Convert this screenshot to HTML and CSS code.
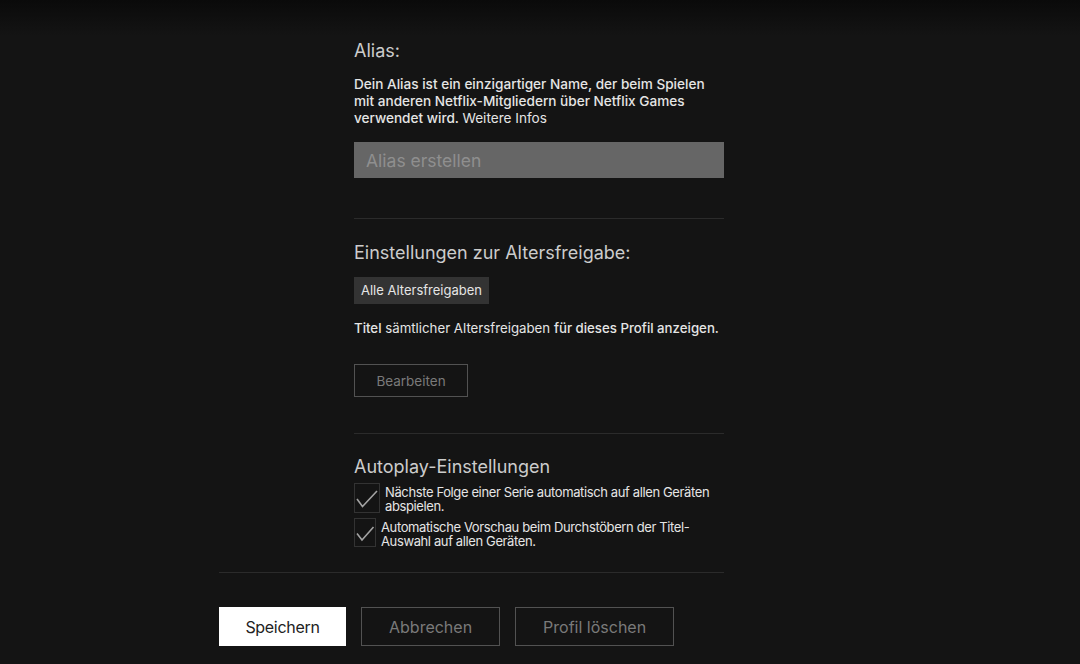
FILE: index.html
```html
<!DOCTYPE html>
<html lang="de">
<head>
    <meta charset="UTF-8">
    <meta name="viewport" content="width=device-width, initial-scale=1.0">
    <title>Profil bearbeiten</title>
    <link rel="stylesheet" href="styles.css">
</head>
<body>
    <div class="page">
        <div class="profile-grid">
            <div class="avatar-col"></div>
            <div class="details">
                <section class="section">
                    <h2 class="section-title">Alias:</h2>
                    <p class="alias-text">Dein Alias ist ein einzigartiger Name, der beim Spielen mit anderen Netflix-Mitgliedern über Netflix Games verwendet wird. <a href="#" class="more-link">Weitere Infos</a></p>
                    <input class="alias-input" type="text" placeholder="Alias erstellen">
                </section>

                <section class="section section-maturity">
                    <h2 class="section-title">Einstellungen zur Altersfreigabe:</h2>
                    <div class="rating-badge">Alle Altersfreigaben</div>
                    <p class="rating-text"><b>Titel</b> sämtlicher Altersfreigaben <b>für dieses Profil anzeigen.</b></p>
                    <button class="btn-outline btn-small">Bearbeiten</button>
                </section>

                <section class="section section-last">
                    <h2 class="section-title">Autoplay-Einstellungen</h2>
                    <label class="check-row">
                        <span class="check-box">
                            <svg viewBox="0 0 26 30" width="26" height="30"><polyline points="3,16 8.5,23.5 23,8" fill="none" stroke="#a3a3a3" stroke-width="1.6"/></svg>
                        </span>
                        <span class="check-label">Nächste Folge einer Serie automatisch auf allen Geräten abspielen.</span>
                    </label>
                    <label class="check-row">
                        <span class="check-box check-box-narrow">
                            <svg viewBox="0 0 22 29" width="22" height="29"><polyline points="3,15.5 8,22 19.5,9" fill="none" stroke="#a3a3a3" stroke-width="1.6"/></svg>
                        </span>
                        <span class="check-label">Automatische Vorschau beim Durchstöbern der Titel-Auswahl auf allen Geräten.</span>
                    </label>
                </section>
            </div>
        </div>

        <div class="actions">
            <button class="btn-save">Speichern</button>
            <button class="btn-outline btn-big">Abbrechen</button>
            <button class="btn-outline btn-big">Profil löschen</button>
        </div>
    </div>
</body>
</html>
```

FILE: styles.css
```css
* {
    margin: 0;
    padding: 0;
    box-sizing: border-box;
}

body {
    font-family: Inter, "Noto Sans", Arial, sans-serif;
    min-height: 100vh;
    background: #141414 linear-gradient(to bottom, #0a0a0a, #141414 36px) no-repeat;
    background-size: 100% 36px;
    color: #e5e5e5;
    overflow: hidden;
}

.page {
    width: 505px;
    margin-left: 219px;
    padding-top: 41px;
}

.profile-grid {
    display: grid;
    grid-template-columns: 135px 370px;
}

.section {
    border-bottom: 1px solid #2b2b2b;
    padding-bottom: 40px;
}

.section-maturity {
    padding-top: 24px;
    padding-bottom: 36px;
}

.section-last {
    border-bottom: none;
    padding-top: 23px;
    padding-bottom: 24px;
}

.section-title {
    font-size: 18px;
    font-weight: 400;
    line-height: 20px;
    color: #cccccc;
}

.alias-text {
    margin-top: 15px;
    font-size: 13.6px;
    font-weight: 500;
    line-height: 17px;
    color: #e5e5e5;
}

.more-link {
    color: #e5e5e5;
    font-weight: 400;
    text-decoration: none;
}

.alias-input {
    display: block;
    width: 370px;
    height: 36px;
    margin-top: 15px;
    padding: 0 12px;
    border: none;
    background-color: #666666;
    font-family: inherit;
    font-size: 17.5px;
    color: #fff;
    outline: none;
}

.alias-input::placeholder {
    color: #8f8f8f;
}

.rating-badge {
    display: inline-block;
    margin-top: 14px;
    height: 27px;
    line-height: 27px;
    padding: 0 7px;
    background-color: #333333;
    font-size: 13px;
    color: #e5e5e5;
}

.rating-text {
    margin-top: 16px;
    font-size: 13.25px;
    line-height: 17px;
    color: #e5e5e5;
}

.rating-text b {
    font-weight: 500;
}

.btn-outline {
    display: block;
    background: transparent;
    border: 1px solid #525252;
    color: #7a7a7a;
    font-family: inherit;
    cursor: pointer;
}

.btn-small {
    margin-top: 27px;
    width: 114px;
    height: 33px;
    font-size: 13.5px;
}

.check-row {
    display: flex;
    align-items: flex-start;
    margin-top: 5px;
}

.section-title + .check-row {
    margin-top: 6px;
}

.check-box {
    flex-shrink: 0;
    display: flex;
    width: 26px;
    height: 30px;
    border: 1px solid #333333;
    margin-right: 5px;
}

.check-box-narrow {
    width: 22px;
    height: 29px;
}

.check-box svg {
    margin: -1px;
}

.check-label {
    padding-top: 2px;
    font-size: 13px;
    line-height: 14px;
    letter-spacing: -0.38px;
    color: #e5e5e5;
}

.actions {
    display: flex;
    gap: 15px;
    border-top: 1px solid #2b2b2b;
    padding-top: 34px;
}

.btn-save {
    height: 39px;
    width: 127px;
    border: none;
    background-color: #fff;
    color: #222;
    font-family: inherit;
    font-size: 16px;
    letter-spacing: -0.3px;
    cursor: pointer;
}

.btn-big {
    height: 39px;
    padding: 0 27px;
    font-size: 16px;
}
```
